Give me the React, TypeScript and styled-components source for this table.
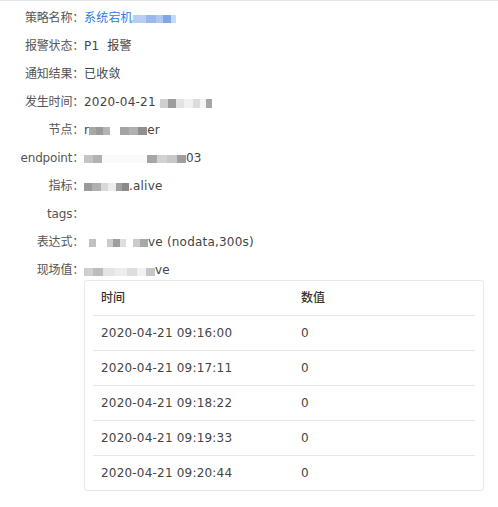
import React from "react";
import styled, { createGlobalStyle } from "styled-components";

const GlobalStyle = createGlobalStyle`
  html, body { margin: 0; padding: 0; background: #fff; }
  body {
    font-family: "DejaVu Sans", "Noto Sans CJK SC", sans-serif;
    font-size: 12px;
    color: #555;
  }
`;

const Page = styled.div`
  border-top: 1px solid #e6e6e6;
  padding-top: 7px;
  width: 498px;
  box-sizing: border-box;
`;

const Row = styled.div`
  display: flex;
  align-items: flex-start;
  line-height: 20px;
  margin-bottom: 8px;
`;

const Label = styled.div`
  width: 84px;
  flex-shrink: 0;
  text-align: right;
  white-space: nowrap;
  color: #555;
  letter-spacing: -0.2px;
`;

const Value = styled.div<{ $link?: boolean }>`
  flex: 1;
  white-space: nowrap;
  letter-spacing: 0.2px;
  color: ${(p) => (p.$link ? "#2d7be6" : "#444")};
`;

const MosaicWrap = styled.span<{ $h: number; $dy: number }>`
  display: inline-flex;
  height: ${(p) => p.$h}px;
  vertical-align: ${(p) => p.$dy}px;
`;

const Cell = styled.span<{ $c: string }>`
  display: block;
  height: 100%;
  background: ${(p) => p.$c};
`;

type CellDef = [number, string];

const Mosaic: React.FC<{ cells: CellDef[]; h?: number; dy?: number }> = ({
  cells,
  h = 8,
  dy = 0,
}) => (
  <MosaicWrap $h={h} $dy={dy}>
    {cells.map(([w, c], i) => (
      <Cell key={i} $c={c} style={{ width: w }} />
    ))}
  </MosaicWrap>
);

const Card = styled.div`
  width: 400px;
  box-sizing: border-box;
  border: 1px solid #e8e8e8;
  border-radius: 3px;
  padding: 0 8px;
  margin-top: 0;
  letter-spacing: 0;
`;

const Table = styled.table`
  width: 100%;
  border-collapse: collapse;
  table-layout: fixed;
`;

const Th = styled.th<{ $w?: number }>`
  height: 34px;
  padding: 0 0 0 8px;
  text-align: left;
  font-weight: 500;
  color: #333;
  border-bottom: 1px solid #e8e8e8;
  width: ${(p) => (p.$w ? `${p.$w}px` : "auto")};
`;

const Tr = styled.tr`
  &:not(:last-child) td {
    border-bottom: 1px solid #e8e8e8;
  }
`;

const Td = styled.td`
  height: 34px;
  padding: 0 0 0 8px;
  color: #444;
  letter-spacing: 0.2px;
`;

const rows = [
  ["2020-04-21 09:16:00", "0"],
  ["2020-04-21 09:17:11", "0"],
  ["2020-04-21 09:18:22", "0"],
  ["2020-04-21 09:19:33", "0"],
  ["2020-04-21 09:20:44", "0"],
];

export default function App() {
  return (
    <>
      <GlobalStyle />
      <Page>
        <Row>
          <Label>策略名称：</Label>
          <Value $link>
            系统宕机
            <Mosaic
              dy={-1}
              cells={[
                [13, "#b7cdf3"],
                [10, "#9ab8ef"],
                [7, "#adc6f2"],
                [8, "#7ea6ea"],
                [5, "#c8daf6"],
              ]}
            />
          </Value>
        </Row>
        <Row>
          <Label>报警状态：</Label>
          <Value>P1&nbsp;&nbsp;报警</Value>
        </Row>
        <Row>
          <Label>通知结果：</Label>
          <Value>已收敛</Value>
        </Row>
        <Row>
          <Label>发生时间：</Label>
          <Value>
            2020-04-21{" "}
            <Mosaic
              h={9}
              dy={-2}
              cells={[
                [8, "#cfcfcf"],
                [8, "#9c9c9c"],
                [8, "#e2e2e2"],
                [9, "#f0f0f0"],
                [7, "#dcdcdc"],
                [6, "#f4f4f4"],
                [6, "#a6a6a6"],
              ]}
            />
          </Value>
        </Row>
        <Row>
          <Label>节点：</Label>
          <Value>
            r
            <Mosaic
              h={8}
              dy={-1}
              cells={[
                [7, "#a8a8a8"],
                [7, "#9a9a9a"],
                [7, "#b4b4b4"],
                [10, "#ffffff"],
                [9, "#a4a4a4"],
                [9, "#b0b0b0"],
                [9, "#8f8f8f"],
              ]}
            />
            er
          </Value>
        </Row>
        <Row>
          <Label>endpoint：</Label>
          <Value>
            <Mosaic
              h={8}
              dy={-1}
              cells={[
                [9, "#c4c4c4"],
                [9, "#b2b2b2"],
                [45, "#fafafa"],
                [10, "#a6a6a6"],
                [10, "#d2d2d2"],
                [10, "#c8c8c8"],
                [9, "#9e9e9e"],
              ]}
            />
            03
          </Value>
        </Row>
        <Row>
          <Label>指标：</Label>
          <Value>
            <Mosaic
              h={8}
              dy={-1}
              cells={[
                [8, "#9a9a9a"],
                [9, "#b0b0b0"],
                [7, "#d8d8d8"],
                [8, "#ececec"],
                [6, "#a0a0a0"],
                [7, "#8a8a8a"],
              ]}
            />
            .alive
          </Value>
        </Row>
        <Row>
          <Label>tags：</Label>
          <Value />
        </Row>
        <Row>
          <Label>表达式：</Label>
          <Value>
            <Mosaic
              h={8}
              dy={-1}
              cells={[
                [5, "#ffffff"],
                [7, "#c0c0c0"],
                [11, "#ffffff"],
                [6, "#cccccc"],
                [7, "#9e9e9e"],
                [6, "#dedede"],
                [7, "#ffffff"],
                [7, "#cacaca"],
                [8, "#a8a8a8"],
              ]}
            />
            ve (nodata,300s)
          </Value>
        </Row>
        <Row>
          <Label>现场值：</Label>
          <Value>
            <Mosaic
              h={8}
              dy={-2}
              cells={[
                [9, "#cfcfcf"],
                [10, "#bdbdbd"],
                [12, "#e4e4e4"],
                [12, "#ececec"],
                [10, "#dcdcdc"],
                [9, "#f2f2f2"],
                [9, "#c6c6c6"],
              ]}
            />
            ve
            <Card>
              <Table>
                <thead>
                  <tr>
                    <Th $w={192}>时间</Th>
                    <Th>数值</Th>
                  </tr>
                </thead>
                <tbody>
                  {rows.map(([t, v]) => (
                    <Tr key={t}>
                      <Td>{t}</Td>
                      <Td>{v}</Td>
                    </Tr>
                  ))}
                </tbody>
              </Table>
            </Card>
          </Value>
        </Row>
      </Page>
    </>
  );
}
